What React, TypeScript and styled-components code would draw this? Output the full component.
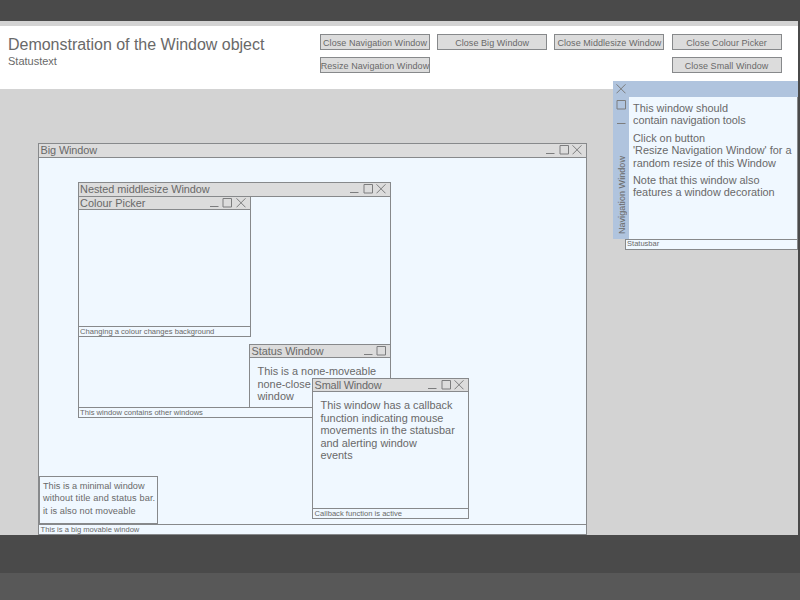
import React from "react";
import styled, { createGlobalStyle, css } from "styled-components";

const GlobalStyle = createGlobalStyle`
  * { box-sizing: border-box; }
  body {
    margin: 0;
    overflow: hidden;
    background: #4a4a4a;
    color: #696969;
    font-family: "Liberation Sans", Arial, sans-serif;
  }
`;

const line = "#87898b";

const Screen = styled.div`
  width: 800px;
  height: 600px;
  display: flex;
  flex-direction: column;
`;
const TopStrip = styled.div`
  height: 21px;
  flex: none;
`;
const Desktop = styled.main`
  position: relative;
  width: 798px;
  height: 514px;
  flex: none;
  background: #d3d3d3;
`;
const BottomStrip = styled.div`
  height: 27px;
  margin-top: auto;
  background: #585858;
`;
const Header = styled.header`
  display: flex;
  align-items: flex-start;
  height: 68px;
  border-top: 5px solid #d3d3d3;
  background: #fff;
`;
const Titles = styled.div`
  width: 320px;
  padding: 9px 0 0 8px;
`;
const Heading = styled.h1`
  margin: 0;
  font-size: 16px;
  font-weight: 400;
  letter-spacing: -0.02px;
  line-height: 19px;
  white-space: nowrap;
`;
const StatusText = styled.p`
  margin: 0;
  font-size: 11px;
  line-height: 15px;
`;
const ButtonGrid = styled.nav`
  display: grid;
  grid-template-columns: repeat(4, 110px);
  grid-auto-rows: 16px;
  column-gap: 7.2px;
  row-gap: 7px;
  padding-top: 8px;
`;
const Button = styled.button<{ $column?: number }>`
  display: flex;
  align-items: center;
  justify-content: center;
  padding: 2px 0 0;
  border: 1px solid ${line};
  background: #dcdcdc;
  color: inherit;
  font-family: inherit;
  font-size: 9px;
  letter-spacing: 0.06px;
  line-height: 12px;
  white-space: nowrap;
  ${(p) => p.$column && css`grid-column: ${p.$column};`}
`;

interface FrameProps {
  $x: number;
  $y: number;
  $w: number;
  $h: number;
}
const Frame = styled.section<FrameProps>`
  position: absolute;
  left: ${(p) => p.$x}px;
  top: ${(p) => p.$y}px;
  width: ${(p) => p.$w}px;
  height: ${(p) => p.$h}px;
  display: flex;
  flex-direction: column;
  border: 1px solid ${line};
  background: #f0f8ff;
`;
const TitleBar = styled.header<{ $height: number }>`
  display: flex;
  align-items: flex-start;
  justify-content: space-between;
  flex: none;
  height: ${(p) => p.$height}px;
  padding: 0 3.6px 0 1.6px;
  border-bottom: 1px solid ${line};
  background: #dcdcdc;
`;
const TitleText = styled.span<{ $spacing?: number }>`
  font-size: 10.9px;
  letter-spacing: ${(p) => p.$spacing ?? -0.05}px;
  line-height: 13px;
  white-space: nowrap;
`;
const Controls = styled.span<{ $vertical?: boolean }>`
  display: flex;
  flex-direction: ${(p) => (p.$vertical ? "column" : "row")};
  gap: ${(p) => (p.$vertical ? 5.5 : 3.5)}px;
  padding-top: ${(p) => (p.$vertical ? 0 : 1)}px;
`;
const Glyph = styled.svg`
  display: block;
  width: 10px;
  height: 10px;
  fill: none;
  stroke: #7c7d7e;
  stroke-width: 1;
`;
const Body = styled.div<{ $small?: boolean }>`
  flex: 1;
  min-height: 0;
  padding: ${(p) => (p.$small ? "2.5px 0 0 3px" : "7px 0 0 7.5px")};
  font-size: ${(p) => (p.$small ? 9.2 : 10.9)}px;
  line-height: 12.5px;
  white-space: nowrap;
`;
const StatusBar = styled.footer`
  flex: none;
  height: 10px;
  padding-left: 1.6px;
  border-top: 1px solid ${line};
  font-size: 7.6px;
  line-height: 9px;
  white-space: nowrap;
`;
const Line = styled.div<{ $spacing?: number }>`
  letter-spacing: ${(p) => p.$spacing ?? 0}px;
`;

const NavFrame = styled.section`
  position: absolute;
  left: 613px;
  top: 60px;
  width: 185px;
  height: 169px;
  display: grid;
  grid-template-columns: 16px 1fr;
  grid-template-rows: 16px 142px 11px;
`;
const NavTop = styled.div`
  grid-column: 2;
  background: #b0c4de;
`;
const NavSide = styled.div`
  grid-column: 1;
  grid-row: 1 / 3;
  display: flex;
  flex-direction: column;
  align-items: center;
  justify-content: space-between;
  padding: 3px 0 5px;
  background: #b0c4de;
`;
const NavTitle = styled.span`
  writing-mode: vertical-rl;
  transform: rotate(180deg);
  margin-right: -2px;
  font-size: 9px;
  letter-spacing: 0.06px;
  line-height: 12px;
  white-space: nowrap;
`;
const NavBody = styled.div`
  grid-column: 2;
  padding: 5px 0 0 4px;
  border-right: 1px solid ${line};
  background: #f0f8ff;
  font-size: 10.9px;
  line-height: 12.4px;
  white-space: nowrap;
`;
const Paragraph = styled.p`
  margin: 0 0 5px;
`;
const NavStatus = styled.footer`
  grid-column: 1 / 3;
  margin-left: 11.5px;
  padding-left: 1.6px;
  border: 1px solid ${line};
  background: #f0f8ff;
  font-size: 7.5px;
  line-height: 8px;
`;

const Minimize = () => (
  <Glyph viewBox="0 0 10 10"><path d="M1 8.5h8.5" /></Glyph>
);
const Maximize = () => (
  <Glyph viewBox="0 0 10 10"><path d="M1 .5h8.5v8.5H1z" /></Glyph>
);
const Close = () => (
  <Glyph viewBox="0 0 10 10"><path d="M.5.3l9 9M9.5.3l-9 9" /></Glyph>
);

interface WindowProps {
  title?: string;
  titleSpacing?: number;
  titleHeight?: number;
  status?: string;
  x: number;
  y: number;
  w: number;
  h: number;
  closable?: boolean;
  lines?: [string, number?][];
}
function Window({
  title, titleSpacing, titleHeight = 13, status, x, y, w, h, closable = true, lines = [],
}: WindowProps) {
  return (
    <Frame $x={x} $y={y} $w={w} $h={h}>
      {title && (
        <TitleBar $height={titleHeight}>
          <TitleText $spacing={titleSpacing}>{title}</TitleText>
          <Controls>
            <Minimize />
            <Maximize />
            {closable && <Close />}
          </Controls>
        </TitleBar>
      )}
      <Body $small={!title}>
        {lines.map(([text, spacing]) => (
          <Line key={text} $spacing={spacing}>{text}</Line>
        ))}
      </Body>
      {status && <StatusBar>{status}</StatusBar>}
    </Frame>
  );
}

export default function App() {
  return (
    <Screen>
      <GlobalStyle />
      <TopStrip />
      <Desktop>
        <Header>
          <Titles>
            <Heading>Demonstration of the Window object</Heading>
            <StatusText>Statustext</StatusText>
          </Titles>
          <ButtonGrid>
            <Button>Close Navigation Window</Button>
            <Button>Close Big Window</Button>
            <Button>Close Middlesize Window</Button>
            <Button>Close Colour Picker</Button>
            <Button>Resize Navigation Window</Button>
            <Button $column={4}>Close Small Window</Button>
          </ButtonGrid>
        </Header>
        <Window x={38} y={122} w={549} h={392} title="Big Window" titleSpacing={-0.12} titleHeight={14} status="This is a big movable window" />
        <Window x={77.5} y={161} w={313.5} h={236} title="Nested middlesize Window" titleHeight={14} status="This window contains other windows" />
        <Window x={77.5} y={175} w={173} h={141} title="Colour Picker" titleSpacing={0} status="Changing a colour changes background" />
        <Window
          x={249} y={323} w={142} h={64} title="Status Window" closable={false}
          lines={[["This is a none-moveable"], ["none-close"], ["window"]]}
        />
        <Window
          x={312} y={357} w={157} h={141} title="Small Window" titleSpacing={-0.18} status="Callback function is active"
          lines={[
            ["This window has a callback"],
            ["function indicating mouse"],
            ["movements in the statusbar", 0.02],
            ["and alerting window"],
            ["events"],
          ]}
        />
        <Window
          x={39} y={455} w={118.5} h={48}
          lines={[
            ["This is a minimal window"],
            ["without title and status bar.", 0.12],
            ["it is also not moveable", 0.08],
          ]}
        />
        <NavFrame>
          <NavSide>
            <Controls $vertical>
              <Close />
              <Maximize />
              <Minimize />
            </Controls>
            <NavTitle>Navigation Window</NavTitle>
          </NavSide>
          <NavTop />
          <NavBody>
            <Paragraph>
              <Line>This window should</Line>
              <Line $spacing={-0.05}>contain navigation tools</Line>
            </Paragraph>
            <Paragraph>
              <Line>Click on button</Line>
              <Line>'Resize Navigation Window' for a</Line>
              <Line>random resize of this Window</Line>
            </Paragraph>
            <Paragraph>
              <Line>Note that this window also</Line>
              <Line>features a window decoration</Line>
            </Paragraph>
          </NavBody>
          <NavStatus>Statusbar</NavStatus>
        </NavFrame>
      </Desktop>
      <BottomStrip />
    </Screen>
  );
}
